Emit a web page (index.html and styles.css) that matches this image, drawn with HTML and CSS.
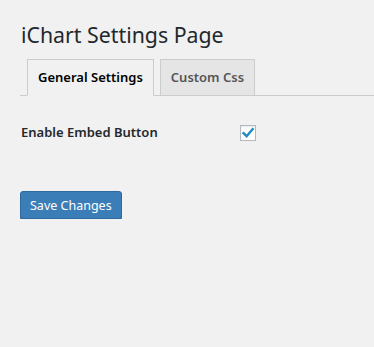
FILE: index.html
```html
<!DOCTYPE html>
<html lang="en">
  <head>
    <meta charset="UTF-8" />
    <title>iChart Settings Page</title>
    <link rel="stylesheet" href="styles.css">
  </head>
  <body>
    <div class="wrap">
      <h1>iChart Settings Page</h1>

      <div class="nav-tabs">
        <a class="nav-tab active">General Settings</a>
        <a class="nav-tab">Custom Css</a>
      </div>

      <form class="settings-form">
        <div class="form-row">
          <label class="form-label" for="embed-button">Enable Embed Button</label>
          <span class="checkbox checked" id="embed-button">
            <svg width="14" height="14" viewBox="0 0 14 14">
              <path d="M2.5 7.2 L5.6 10.2 L11.6 3.2" fill="none" stroke="#1e8cbe" stroke-width="2.4" stroke-linecap="square"/>
            </svg>
          </span>
        </div>

        <button type="button" class="button-primary">Save Changes</button>
      </form>
    </div>
  </body>
</html>
```

FILE: styles.css
```css
html, body {
  margin: 0;
  padding: 0;
  background-color: #f1f1f1;
}

body {
  font-family: 'Noto Sans', 'Open Sans', sans-serif;
  color: #23282d;
  font-size: 13px;
}

.wrap {
  padding: 0 0 0 20px;
}

h1 {
  margin: 0;
  padding: 20px 0 0 1px;
  font-size: 21.3px;
  font-weight: 400;
  line-height: 29px;
  color: #23282d;
}

.nav-tabs {
  display: flex;
  gap: 6px;
  margin-top: 10px;
  padding-left: 7px;
  border-bottom: 1px solid #ccc;
}

.nav-tab {
  display: block;
  margin-bottom: -1px;
  padding: 0 10px;
  height: 35px;
  line-height: 35px;
  font-size: 13px;
  font-weight: 600;
  color: #555;
  background-color: #e5e5e5;
  border: 1px solid #ccc;
  border-bottom: none;
}

.nav-tab.active {
  color: #000;
  background-color: #f1f1f1;
  border-bottom: 1px solid #f1f1f1;
}

.settings-form {
  padding-top: 27px;
}

.form-row {
  display: flex;
  align-items: center;
}

.form-label {
  width: 219px;
  padding-left: 1px;
  font-size: 13px;
  font-weight: 600;
  color: #23282d;
}

.checkbox {
  display: flex;
  align-items: center;
  justify-content: center;
  width: 14px;
  height: 14px;
  margin-top: 1px;
  background-color: #fff;
  border: 1px solid #b4b9be;
  box-shadow: inset 0 1px 2px rgba(0, 0, 0, 0.1);
}

.button-primary {
  display: block;
  margin-top: 50px;
  height: 28px;
  padding: 0 9px;
  white-space: nowrap;
  font-family: 'Noto Sans', 'Open Sans', sans-serif;
  font-size: 12.5px;
  color: #fff;
  background-color: #3a7db7;
  border: 1px solid #2d6a9f;
  border-radius: 3px;
  box-shadow: 0 1px 0 #2d6a9f;
  cursor: pointer;
}
```
